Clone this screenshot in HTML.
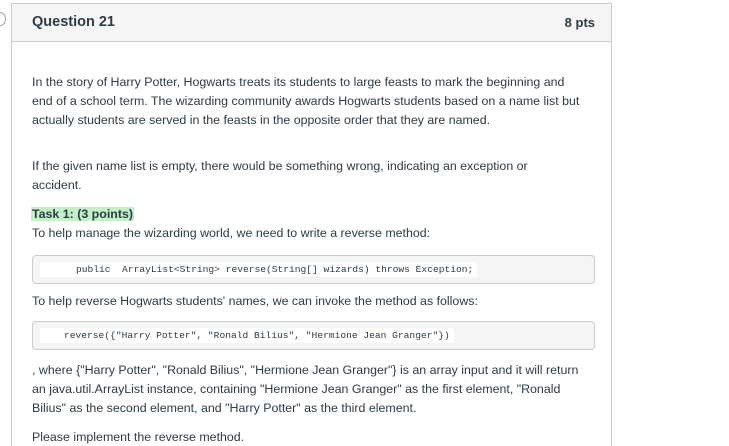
<!DOCTYPE html>
<html><head><style>
html,body{margin:0;width:729px;height:446px;overflow:hidden}
body{background:#fff;font-family:"Liberation Sans",sans-serif;color:#2d3b45;position:relative}
.box{position:absolute;left:11px;top:3px;width:599px;height:460px;border:1px solid #c7cdd1;border-bottom:none}
.hd{position:absolute;left:0;top:0;width:599px;height:37px;background:#f5f5f5;border-bottom:1px solid #c7cdd1}
.t{position:absolute;left:32px;font-size:12.4px;white-space:nowrap;letter-spacing:0}
.code{position:absolute;left:32px;width:561px;height:27px;background:#f5f5f5;border:1px solid #c7cdd1;border-radius:4px}
.strip{position:absolute;top:6px;left:7px;height:15px;background:#fff;font-family:"Liberation Mono",monospace;font-size:9.6px;line-height:15px;white-space:pre;padding-right:4px}
</style></head><body>
<div style="position:absolute;left:-6px;top:12px;width:10px;height:12px;border:1px solid #9aa;border-radius:50%"></div>
<div class="box"><div class="hd">
<div style="position:absolute;left:20px;top:10px;font-size:14.5px;font-weight:bold">Question 21</div>
<div style="position:absolute;right:16px;top:11px;font-size:13px;font-weight:bold">8 pts</div>
</div></div>
<div class="t" style="top:75px">In the story of Harry Potter, Hogwarts treats its students to large feasts to mark the beginning and</div>
<div class="t" style="top:94px">end of a school term. The wizarding community awards Hogwarts students based on a name list but</div>
<div class="t" style="top:113px">actually students are served in the feasts in the opposite order that they are named.</div>
<div class="t" style="top:159px">If the given name list is empty, there would be something wrong, indicating an exception or</div>
<div class="t" style="top:178px">accident.</div>
<div class="t" style="top:207px;font-weight:bold;background:#c4f0c8;padding:0 1px;left:31px">Task 1: (3 points)</div>
<div class="t" style="top:226px">To help manage the wizarding world, we need to write a reverse method:</div>
<div class="code" style="top:255px"><div class="strip" style="padding-left:36px">public  ArrayList&lt;String&gt; reverse(String[] wizards) throws Exception;</div></div>
<div class="t" style="top:294px">To help reverse Hogwarts students' names, we can invoke the method as follows:</div>
<div class="code" style="top:321px"><div class="strip" style="padding-left:24px">reverse({"Harry Potter", "Ronald Bilius", "Hermione Jean Granger"})</div></div>
<div class="t" style="top:363px">, where {"Harry Potter", "Ronald Bilius", "Hermione Jean Granger"} is an array input and it will return</div>
<div class="t" style="top:382px">an java.util.ArrayList instance, containing "Hermione Jean Granger" as the first element, "Ronald</div>
<div class="t" style="top:401px">Bilius" as the second element, and "Harry Potter" as the third element.</div>
<div class="t" style="top:430px">Please implement the reverse method.</div>
</body></html>
